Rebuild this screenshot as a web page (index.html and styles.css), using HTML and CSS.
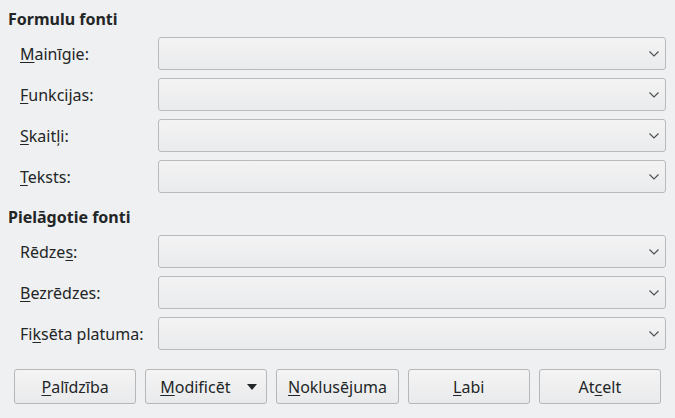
FILE: index.html
```html
<!DOCTYPE html>
<html lang="lv">
<head>
<meta charset="utf-8">
<title>Fonti</title>
<link rel="stylesheet" href="styles.css">
</head>
<body>
<div class="dialog">
  <section class="group">
    <h2 class="group-title">Formulu fonti</h2>
    <div class="form">
      <label class="lbl"><u>M</u>ainīgie:</label>
      <div class="combo"><svg class="chev" width="10" height="6" viewBox="0 0 10 6"><path d="M0.5 0.5 L5 5 L9.5 0.5" fill="none" stroke="#4a4c4e" stroke-width="1.1"/></svg></div>
      <label class="lbl"><u>F</u>unkcijas:</label>
      <div class="combo"><svg class="chev" width="10" height="6" viewBox="0 0 10 6"><path d="M0.5 0.5 L5 5 L9.5 0.5" fill="none" stroke="#4a4c4e" stroke-width="1.1"/></svg></div>
      <label class="lbl"><u>S</u>kaitļi:</label>
      <div class="combo"><svg class="chev" width="10" height="6" viewBox="0 0 10 6"><path d="M0.5 0.5 L5 5 L9.5 0.5" fill="none" stroke="#4a4c4e" stroke-width="1.1"/></svg></div>
      <label class="lbl"><u>T</u>eksts:</label>
      <div class="combo"><svg class="chev" width="10" height="6" viewBox="0 0 10 6"><path d="M0.5 0.5 L5 5 L9.5 0.5" fill="none" stroke="#4a4c4e" stroke-width="1.1"/></svg></div>
    </div>
  </section>
  <section class="group group-2">
    <h2 class="group-title">Pielāgotie fonti</h2>
    <div class="form">
      <label class="lbl">Rēdze<u>s</u>:</label>
      <div class="combo"><svg class="chev" width="10" height="6" viewBox="0 0 10 6"><path d="M0.5 0.5 L5 5 L9.5 0.5" fill="none" stroke="#4a4c4e" stroke-width="1.1"/></svg></div>
      <label class="lbl"><u>B</u>ezrēdzes:</label>
      <div class="combo"><svg class="chev" width="10" height="6" viewBox="0 0 10 6"><path d="M0.5 0.5 L5 5 L9.5 0.5" fill="none" stroke="#4a4c4e" stroke-width="1.1"/></svg></div>
      <label class="lbl">Fi<u>k</u>sēta platuma:</label>
      <div class="combo"><svg class="chev" width="10" height="6" viewBox="0 0 10 6"><path d="M0.5 0.5 L5 5 L9.5 0.5" fill="none" stroke="#4a4c4e" stroke-width="1.1"/></svg></div>
    </div>
  </section>
  <div class="buttons">
    <button class="btn"><u>P</u>alīdzība</button>
    <button class="btn btn-menu"><span><u>M</u>odificēt</span><span class="tri"></span></button>
    <button class="btn"><u>N</u>oklusējuma</button>
    <button class="btn"><u>L</u>abi</button>
    <button class="btn">At<u>c</u>elt</button>
  </div>
</div>
</body>
</html>
```
FILE: styles.css
```css
html, body {
  margin: 0;
  padding: 0;
  background: #eff0f1;
}
body {
  font-family: "Noto Sans", "DejaVu Sans", sans-serif;
  font-size: 16px;
  color: #232627;
}
.dialog {
  padding: 8px 9px 0 8px;
}
.group-title {
  margin: 0;
  font-size: 16px;
  font-weight: bold;
  line-height: 22px;
}
.group-2 {
  margin-top: 13px;
}
.form {
  display: grid;
  grid-template-columns: 138px 1fr;
  row-gap: 8px;
  padding-left: 12px;
  margin-top: 7px;
}
.lbl {
  align-self: center;
  line-height: 22px;
  white-space: nowrap;
}
u {
  text-decoration-thickness: 1px;
  text-underline-offset: 2px;
}
.combo {
  height: 33px;
  box-sizing: border-box;
  border: 1px solid #b9babb;
  border-radius: 3px;
  background: linear-gradient(#f3f3f4, #eaebec);
  display: flex;
  align-items: center;
  justify-content: flex-end;
  padding-right: 6px;
}
.chev {
  display: block;
}
.buttons {
  display: grid;
  grid-template-columns: repeat(5, minmax(0, 1fr));
  column-gap: 9px;
  margin: 19px 5px 0 6px;
}
.btn {
  height: 35px;
  box-sizing: border-box;
  border: 1px solid #b6b7b8;
  border-radius: 3px;
  background: linear-gradient(#f4f4f5, #e9eaeb);
  box-shadow: 0 1px 0 rgba(0,0,0,0.06);
  font-family: "Noto Sans", "DejaVu Sans", sans-serif;
  font-size: 16px;
  color: #232627;
  padding: 0;
  white-space: nowrap;
  display: flex;
  align-items: center;
  justify-content: center;
}
.btn-menu {
  justify-content: space-between;
  padding: 0 9px 0 14px;
}
.tri {
  width: 0;
  height: 0;
  border-left: 5.5px solid transparent;
  border-right: 5.5px solid transparent;
  border-top: 6px solid #232627;
}
```
